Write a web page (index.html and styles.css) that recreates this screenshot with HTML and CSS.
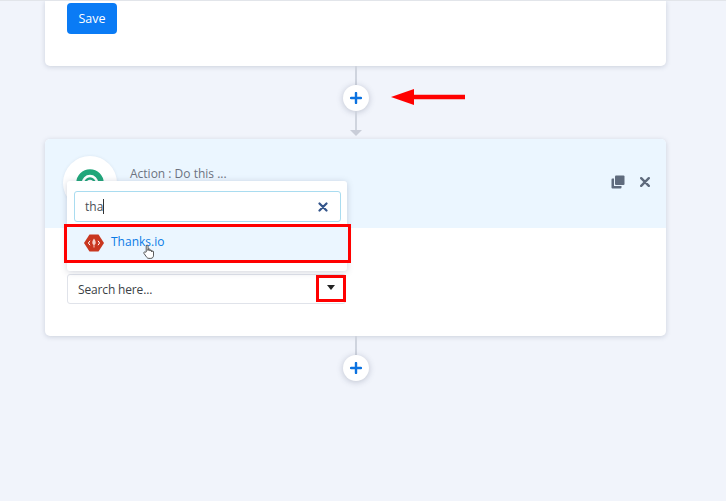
FILE: index.html
```html
<!DOCTYPE html>
<html lang="en">
<head>
<meta charset="utf-8">
<title>Workflow</title>
<link rel="stylesheet" href="styles.css">
</head>
<body>
<main class="flow">
  <section class="card top-card">
    <button class="save">Save</button>
  </section>

  <div class="connector first">
    <span class="line"></span>
    <span class="plus"><svg viewBox="0 0 12 12" width="12" height="12"><path d="M6 1v10M1 6h10" stroke="#0b72e0" stroke-width="2.4" stroke-linecap="round"/></svg></span>
    <span class="line short"></span>
    <span class="tip"></span>
    <svg class="arrow" viewBox="0 0 75 18" width="75" height="18"><path d="M0 9 23 1V6.800H74v4.400H23V17Z" fill="#f00"/></svg>
  </div>

  <section class="card action-card">
    <header class="action-head">
      <div class="avatar"><svg viewBox="0 0 54 54" width="54" height="54"><circle cx="27" cy="27" r="11" fill="none" stroke="#21a67a" stroke-width="5.500"/><circle cx="27" cy="27" r="4.500" fill="none" stroke="#21a67a" stroke-width="2.500"/></svg></div>
      <p class="action-label">Action : Do this ...</p>
      <div class="head-tools">
        <svg viewBox="0 0 14 14" width="14" height="14"><path d="M4 1.500A1 1 0 0 1 5 .5h7.500a1 1 0 0 1 1 1V9a1 1 0 0 1-1 1H5a1 1 0 0 1-1-1Z" fill="#5f6b7d"/><path d="M3 3.500V11h7.500v1.500a1 1 0 0 1-1 1H1.500a1 1 0 0 1-1-1V4.500a1 1 0 0 1 1-1Z" fill="#5f6b7d"/></svg>
        <svg viewBox="0 0 10 10" width="10" height="10"><path d="M1.200 1.200l7.600 7.600M8.800 1.200l-7.600 7.600" stroke="#5f6b7d" stroke-width="2.400" stroke-linecap="round"/></svg>
      </div>
    </header>
    <div class="action-body">
      <div class="select">
        <span>Search here...</span>
        <span class="caret"></span>
      </div>
      <span class="caret-mark"></span>
    </div>

    <div class="dropdown">
      <div class="search">
        <span class="typed">tha</span>
        <svg viewBox="0 0 10 10" width="10" height="10"><path d="M1.500 1.500l7 7M8.500 1.500l-7 7" stroke="#34558b" stroke-width="2.200" stroke-linecap="round"/></svg>
      </div>
      <div class="option">
        <svg class="logo" viewBox="0 0 20 18" width="20" height="18"><path d="M5.500.5h9L20 9l-5.500 8.500h-9L0 9Z" fill="#c9371f"/><path d="M10 4.500c1.300 1.600 1.700 3 1.700 4.300 0 1.100-.7 2-1.700 2.400-1-.4-1.700-1.300-1.700-2.400 0-1.300.4-2.700 1.700-4.300Z" fill="#f6d2c8"/><path d="M10 11.200v2.300" stroke="#f6d2c8" stroke-width="1"/><path d="M6 6.800 4.400 9 6 11.200M14 6.800 15.600 9 14 11.200" fill="none" stroke="#fff" stroke-width="1"/></svg>
        <span class="option-name">Thanks.io</span>
        <svg class="hand" viewBox="0 0 12 16" width="11" height="15"><path d="M3.500 8.500V2a1 1 0 0 1 2 0v5V6a1 1 0 0 1 2 0v1.500a1 1 0 0 1 2 0v1a1 1 0 0 1 2 0V12c0 2-1 3.500-3 3.500H6.500c-1.500 0-2.300-.8-3-2L1 10c-.6-1 .7-2 1.500-1.200Z" fill="#fff" stroke="#333" stroke-width=".9"/></svg>
      </div>
    </div>
  </section>

  <div class="connector last">
    <span class="line tiny"></span>
    <span class="plus"><svg viewBox="0 0 12 12" width="12" height="12"><path d="M6 1v10M1 6h10" stroke="#0b72e0" stroke-width="2.400" stroke-linecap="round"/></svg></span>
  </div>
</main>
</body>
</html>
```
FILE: styles.css
```css
* { box-sizing: border-box; }
html, body { margin: 0; height: 100%; }
body {
  background: #f1f4fb;
  font-family: "Open Sans", "Liberation Sans", sans-serif;
  font-size: 12px;
  color: #333;
  overflow: hidden;
  border-top: 1px solid #e2e5ea;
}
.flow {
  width: 621px;
  margin-left: 45px;
  display: flex;
  flex-direction: column;
}
.card {
  background: #fff;
  border-radius: 5px;
  box-shadow: 0 1px 5px rgba(70, 80, 110, .22);
}
.top-card {
  height: 65px;
  padding: 2px 22px;
  border-radius: 0 0 5px 5px;
}
.save {
  display: block;
  width: 50px;
  height: 31px;
  padding: 0;
  border: 0;
  border-radius: 4px;
  background: #0a7bf5;
  color: #fff;
  font: 500 12.500px "Open Sans", "Liberation Sans", sans-serif;
}
.connector {
  display: flex;
  flex-direction: column;
  align-items: center;
  position: relative;
}
.connector.first { height: 73px; }
.connector.last { height: 50px; }
.line { width: 2px; height: 19px; background: #cfd4de; }
.line.short { height: 19px; }
.line.tiny { height: 19px; }
.plus {
  width: 26px;
  height: 26px;
  flex: none;
  border-radius: 50%;
  background: #fff;
  box-shadow: 0 1px 6px rgba(70, 80, 110, .3);
  display: flex;
  align-items: center;
  justify-content: center;
}
.tip {
  width: 0;
  height: 0;
  border-left: 6px solid transparent;
  border-right: 6px solid transparent;
  border-top: 6px solid #c9cdd8;
}
.arrow { position: absolute; left: 346px; top: 22px; }
.action-card { height: 197px; position: relative; }
.action-head {
  height: 89px;
  background: #ebf6ff;
  border-radius: 5px 5px 0 0;
  display: flex;
  padding: 17px 16px 0 18px;
}
.avatar {
  width: 54px;
  height: 54px;
  border-radius: 50%;
  background: #fff;
  box-shadow: 0 0 3px rgba(70, 80, 110, .1);
  flex: none;
  display: flex;
}
.action-label {
  margin: 10px 0 0 13px;
  color: #6d7380;
  font-size: 12px;
  line-height: 16px;
  flex: 1;
}
.head-tools {
  display: flex;
  align-items: center;
  gap: 15px;
  height: 16px;
  margin-top: 18px;
}
.action-body { padding: 46px 320px 0 22px; }
.select {
  width: 279px;
  height: 30px;
  border: 1px solid #e0e3ea;
  border-radius: 3px;
  display: flex;
  align-items: center;
  justify-content: space-between;
  padding: 0 9px 0 10px;
  color: #3b3f46;
  font-size: 12px;
  letter-spacing: -.15px;
  position: relative;
}
.caret {
  width: 0;
  height: 0;
  border-left: 4.500px solid transparent;
  border-right: 4.500px solid transparent;
  border-top: 5px solid #222;
  margin-top: -3px;
  margin-right: 1px;
}
.caret-mark {
  position: absolute;
  left: 271px;
  top: 136px;
  width: 30px;
  height: 27px;
  border: 3px solid #f00;
}
.dropdown {
  position: absolute;
  left: 22px;
  top: 42px;
  width: 280px;
  height: 90px;
  background: #fff;
  border-radius: 3px;
  box-shadow: 0 1px 6px rgba(70, 80, 110, .25);
  padding: 10px 6px 0 7px;
}
.search {
  height: 31px;
  border: 1px solid #a9dcf0;
  border-radius: 3px;
  display: flex;
  align-items: center;
  justify-content: space-between;
  padding: 0 12px 0 10px;
  color: #4a4f57;
  font-size: 12px;
}
.typed { border-right: 1px solid #333; line-height: 15px; }
.option {
  position: absolute;
  left: -3px;
  top: 43px;
  width: 287px;
  height: 39px;
  background: #ebf6ff;
  border: 3px solid #f00;
  display: flex;
  align-items: center;
  padding: 0 0 2px 17px;
  gap: 7px;
}
.option-name { color: #0a7be6; font-size: 12px; margin-top: -2px; }
.hand { position: absolute; left: 76px; top: 17px; }
```
